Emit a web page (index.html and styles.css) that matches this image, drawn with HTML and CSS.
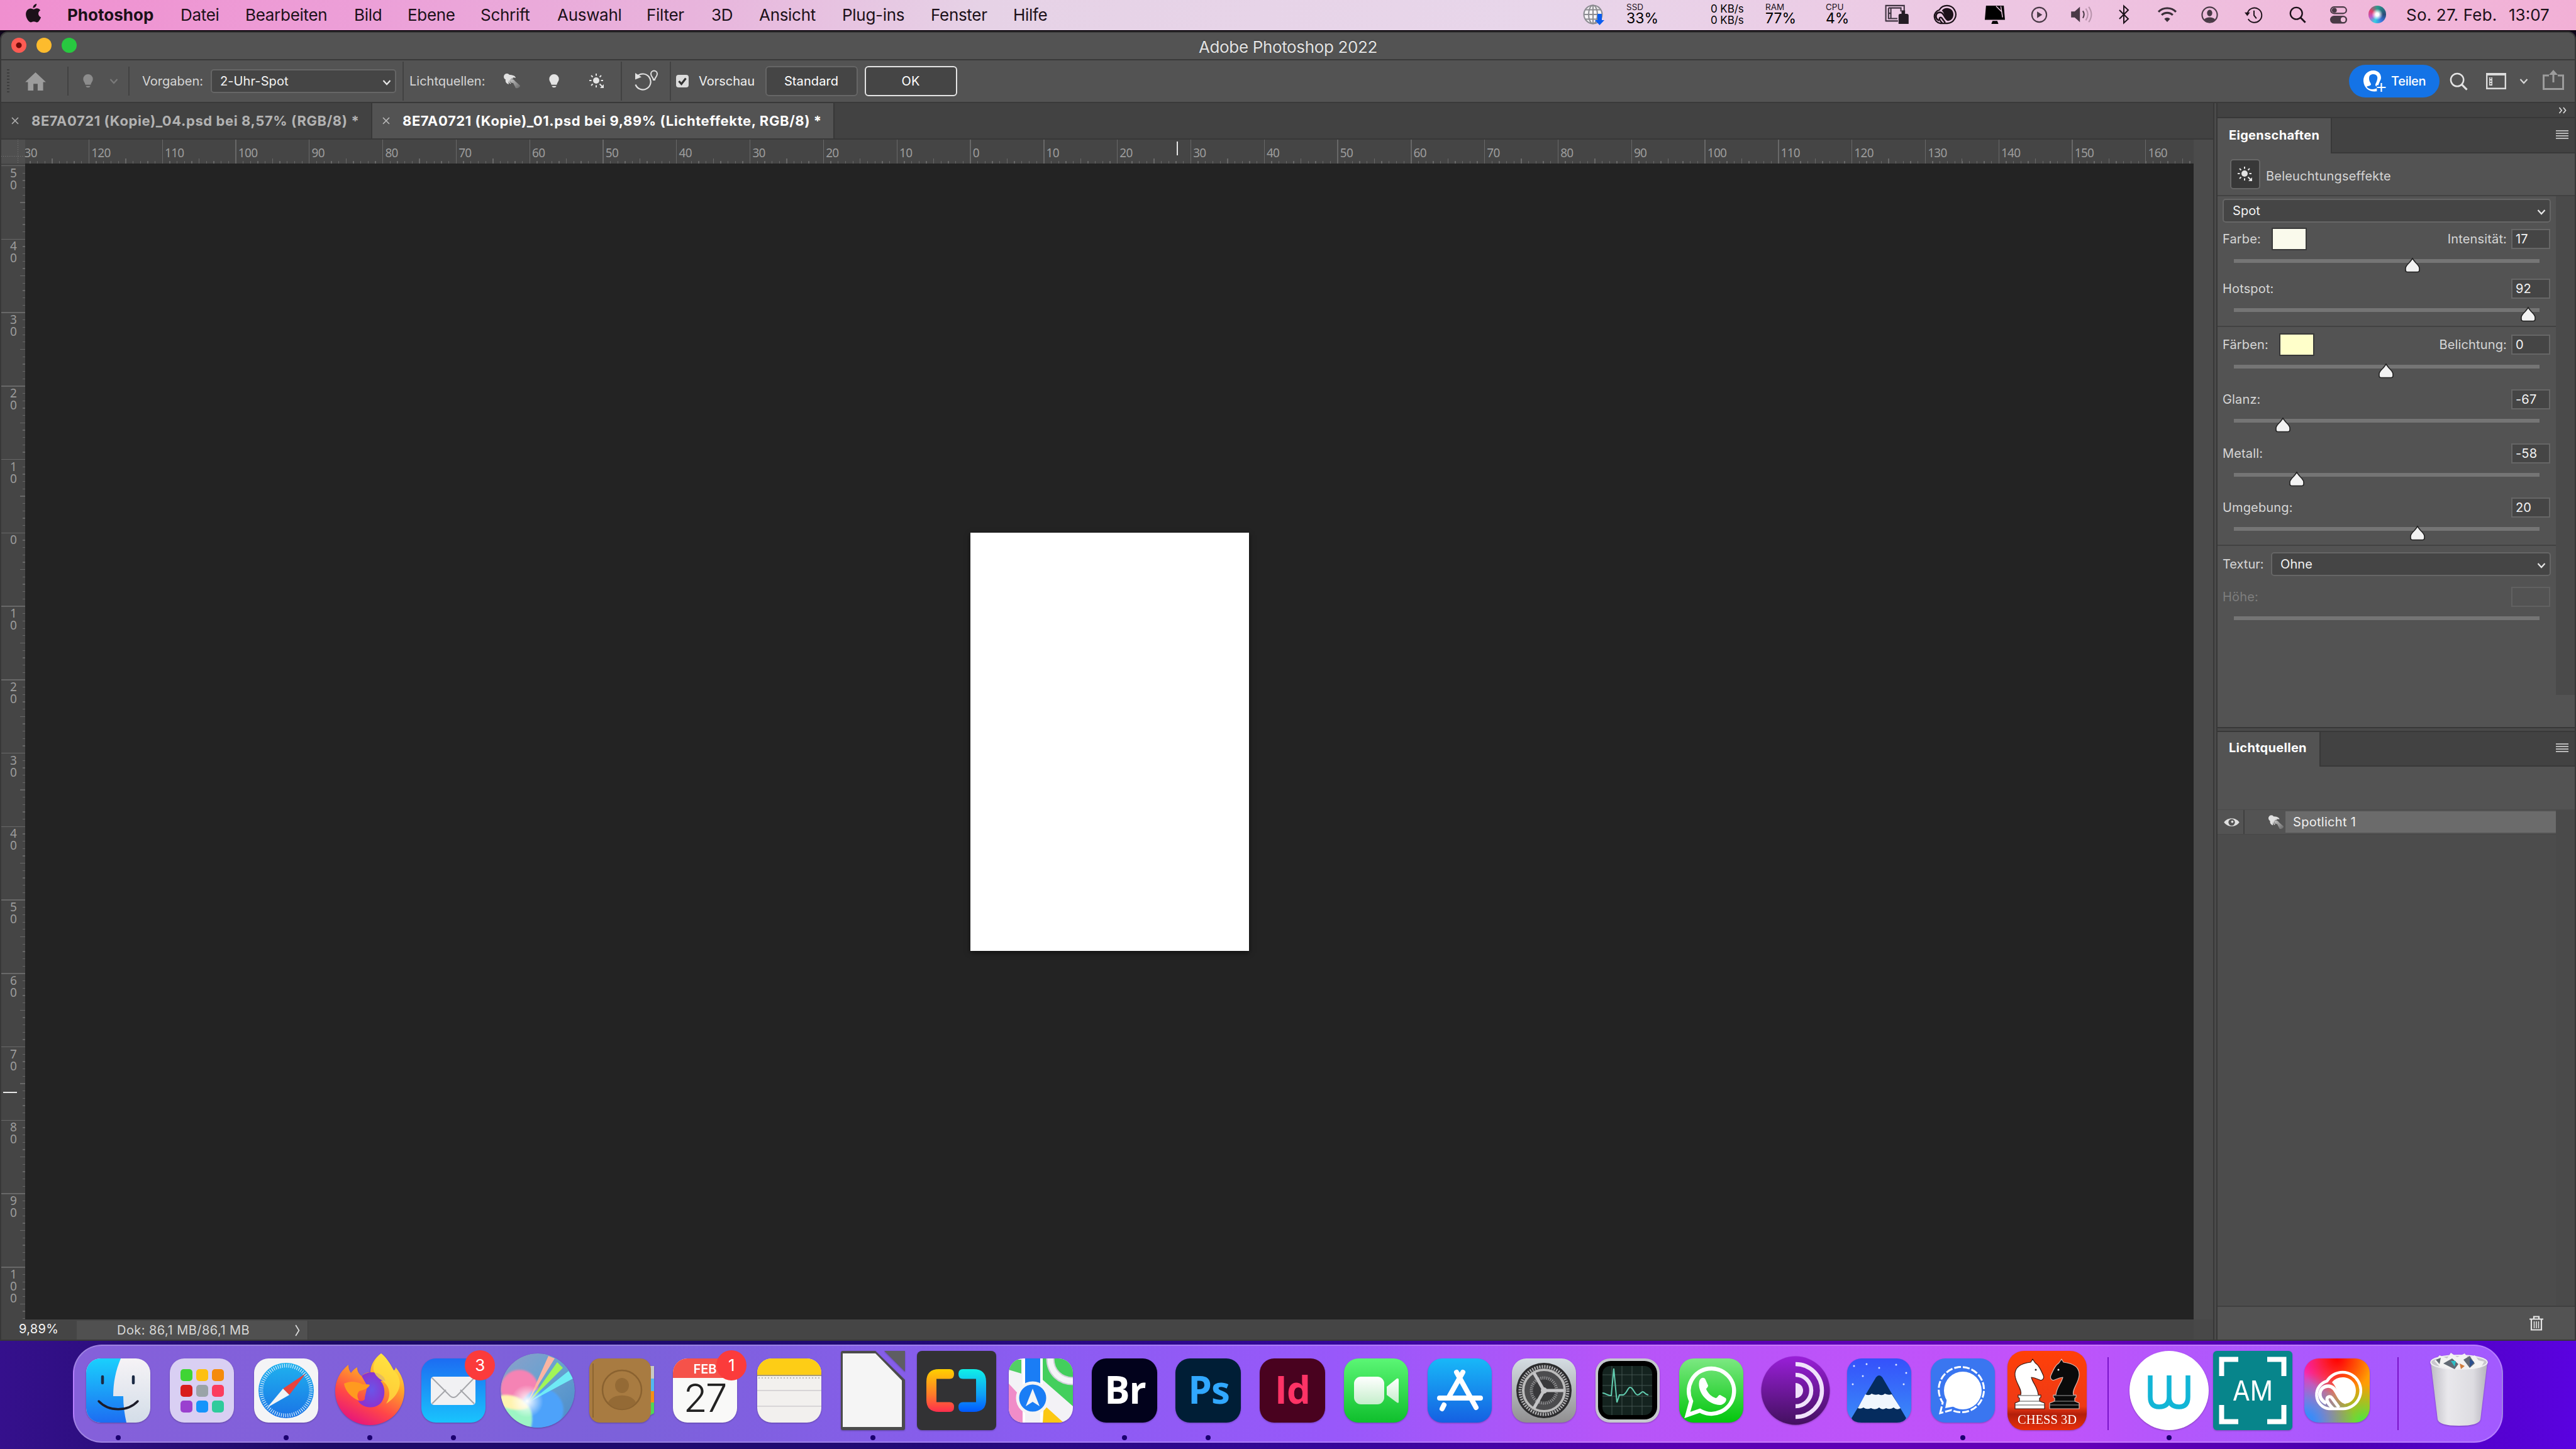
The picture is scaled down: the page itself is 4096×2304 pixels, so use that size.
FILE: index.html
```html
<!DOCTYPE html>
<html lang="de">
<head>
<meta charset="utf-8">
<title>Adobe Photoshop 2022</title>
<link rel="stylesheet" href="styles.css">
</head>
<body>
<svg class="defs" width="0" height="0" aria-hidden="true">
  <defs>
    <linearGradient id="g-cone" x1="0" y1="0" x2="1" y2="1"><stop offset="0" stop-color="#c4c4c4"/><stop offset="1" stop-color="#686868"/></linearGradient>
    <symbol id="chev" viewBox="0 0 14 10"><path d="M1.500 2 7 8l5.500-6" fill="none" stroke="currentColor" stroke-width="2.200"/></symbol>
    <symbol id="bulb" viewBox="0 0 18 24"><path d="M9 0a8 8 0 0 1 8 8.200c0 3.400-2.500 5-3.500 9.300h-9C3.500 13.200 1 11.600 1 8.200A8 8 0 0 1 9 0zM5 19.500h8L11 22H7z" fill="currentColor"/></symbol>
    <symbol id="spot" viewBox="0 0 28 24"><circle cx="6" cy="5" r="5" fill="#e0e0e0"/><path d="M8 2c4 0 11 0 12 5-3-1-6-1-8 1-3 2-4 5-3 9-4-1-6-4-5-8z" fill="#e0e0e0"/><path d="M12 16c-4-3-2-9 4-9" fill="none" stroke="#e0e0e0" stroke-width="1.500"/><path d="M11 11c1-3 5-3 8 1l8 7c0 3-4 5-7 4l-4-8c-3 0-5-1-5-4z" fill="url(#g-cone)"/></symbol>
    <symbol id="sun" viewBox="0 0 24 24"><circle cx="11" cy="11" r="5" fill="currentColor"/><path d="M11 0v3.500M11 18.500V22M0 11h3.500M18.500 11H22M3 3l2.500 2.500M19 3l-2.500 2.500M3 19l2.500-2.500M16.500 16.500l4 4" stroke="currentColor" stroke-width="2" fill="none"/><path d="M23 17v6h-6z" fill="currentColor"/></symbol>
    <symbol id="burger" viewBox="0 0 20 14"><path d="M0 1h20M0 5h20M0 9h20M0 13h20" stroke="currentColor" stroke-width="1.800"/></symbol>
    <symbol id="close" viewBox="0 0 12 12"><path d="m1 1 10 10M11 1 1 11" stroke="currentColor" stroke-width="1.600"/></symbol>
    <symbol id="thumb" viewBox="0 0 24 24"><path d="M12 1.500c1 1.500 2 3 5 6.500 4 4 6 6 6 9v3c0 2-1 3-3 3H4c-2 0-3-1-3-3v-3c0-3 2-5 6-9 3-3.500 4-5 5-6.500z" fill="#f2f2f2" stroke="#222" stroke-width="1.600"/></symbol>
    <symbol id="lens" viewBox="0 0 30 30"><circle cx="12.500" cy="12.500" r="10.500" fill="none" stroke="currentColor" stroke-width="2.600"/><path d="m20 20 8.500 8.500" stroke="currentColor" stroke-width="3.200"/></symbol>
    <symbol id="cloud" viewBox="0 0 84 66"><path d="M28 62h23a29 29 0 1 0-26-44A22.500 22.500 0 0 0 28 62z" fill="none" stroke="currentColor" stroke-width="4.500"/><path d="M24 53C8 46 12 26 27 26c15 0 13 22 28 26" fill="none" stroke="currentColor" stroke-width="5.500"/><path d="M44 60 33 45c-3-4-8-2-8 2 0 5 5 10 10 15" fill="none" stroke="currentColor" stroke-width="5"/><path d="M33 20C43 6 71 10 71 33c0 18-17 26-24 17-5-8-5-22-14-30z" fill="currentColor"/></symbol>
  </defs>
</svg>

<header class="menubar">
  <svg class="apple" viewBox="0 0 25 30"><path d="M17.500 0c.3 3-2.500 6.500-5.500 6.500C11.600 3.500 14.500.4 17.500 0zM13 8.500c1.200 0 2.800-1.400 5-1.400 2 0 4 1 5.300 2.900-4.500 2.700-3.800 8.800.9 10.800-1 2.900-3.500 7.700-6.200 7.700-1.800 0-2.500-1.100-4.800-1.100-2.300 0-3 1.100-4.700 1.100C5.500 28.500 1 22 1 16.300c0-5.600 3.600-9 7.200-9 2 0 3.500 1.200 4.800 1.200z" fill="#1c1119"/></svg>
  <nav class="menus"><b class="m-app">Photoshop</b><span>Datei</span><span>Bearbeiten</span><span>Bild</span><span>Ebene</span><span>Schrift</span><span>Auswahl</span><span>Filter</span><span>3D</span><span>Ansicht</span><span>Plug-ins</span><span>Fenster</span><span>Hilfe</span></nav>
  <div class="tray">
    <svg viewBox="0 0 34 34"><g fill="none" stroke="#8c8c92" stroke-width="2"><circle cx="17" cy="17" r="14.500" fill="#f5f2f5"/><ellipse cx="17" cy="17" rx="7" ry="14.500"/><path d="M17 2v30M2.500 17h29M5 9.500h24M5 24.500h24"/></g><path d="M24 16h7v10h4l-7.500 8L20 26h4z" fill="#0a5cf0"/></svg>
    <div class="stat"><small>SSD</small><span>33%</span></div>
    <div class="net"><span>0 KB/s</span><span>0 KB/s</span></div>
    <div class="stat"><small>RAM</small><span>77%</span></div>
    <div class="stat"><small>CPU</small><span>4%</span></div>
    <svg class="t-drive" viewBox="0 0 40 34"><path d="M1.500 29V2h31v9M1.500 28H22M6 6h21v6M6 6v18h15M10 6v18M6 15h5" fill="none" stroke="#3f3340" stroke-width="2.200"/><path d="M28 10h6v6h3c2 0 3 1 3 3v14H23V19c0-2 1-3 3-3h2z" fill="#241c24"/></svg>
    <svg class="t-cc"><use href="#cloud"/></svg>
    <svg class="t-mac" viewBox="0 0 36 34"><path d="M3 2h30l2 24H1zM14 28h8l2 5H12z" fill="#000"/><path d="m20 3 10 10M28 3l3 19" stroke="#efc8e2" stroke-width="1.500"/></svg>
    <svg class="t-play" viewBox="0 0 30 30"><circle cx="15" cy="15" r="12" fill="none" stroke="#493a46" stroke-width="2.200"/><path d="m11.500 9.500 8.500 5.500-8.500 5.500z" fill="#493a46"/></svg>
    <svg class="t-vol" viewBox="0 0 38 30"><path d="M1 10h6l9-8v26l-9-8H1z" fill="#493a46"/><path d="M21 9q4 6 0 12" fill="none" stroke="#493a46" stroke-width="2.200"/><path d="M26 5q7 10 0 20M31 2q9 13 0 26" fill="none" stroke="#b894ac" stroke-width="2.200"/></svg>
    <svg class="t-bt" viewBox="0 0 20 30"><path d="m3 8 14 14-7 6.500v-27L17 8 3 22" fill="none" stroke="#1c1119" stroke-width="2"/></svg>
    <svg class="t-wifi" viewBox="0 0 34 28"><path d="M2 9.500a21 21 0 0 1 30 0M7.500 15a13.500 13.500 0 0 1 19 0" fill="none" stroke="#3a2e38" stroke-width="3.400"/><path d="m17 27-5-5.500a7 7 0 0 1 10 0z" fill="#3a2e38"/></svg>
    <svg class="t-user" viewBox="0 0 30 30"><circle cx="15" cy="15" r="12.500" fill="none" stroke="#493a46" stroke-width="2.200"/><ellipse cx="15" cy="12" rx="4.300" ry="5.400" fill="#493a46"/><path d="M6 23c3-5 15-5 18 0-5 5-13 5-18 0z" fill="#493a46"/></svg>
    <svg class="t-clock" viewBox="0 0 30 30"><path d="M5 11.500A12 12 0 1 1 6 22M15.500 8v8l4 5" fill="none" stroke="#1c1119" stroke-width="2"/><path d="M0 11h9l-4.500 6z" fill="#1c1119"/></svg>
    <svg class="t-lens"><use href="#lens"/></svg>
    <svg class="t-ctl" viewBox="0 0 30 30"><rect x="2.200" y="2.200" width="25.600" height="10.600" rx="5.300" fill="none" stroke="#493a46" stroke-width="2.200"/><circle cx="8" cy="7.500" r="4" fill="#493a46"/><rect x="1" y="16.500" width="28" height="13" rx="6.500" fill="#493a46"/><circle cx="22.500" cy="23" r="4" fill="#f0bfdc"/></svg>
    <i class="siri"></i>
    <span class="date">So. 27. Feb.</span><span class="time">13:07</span>
  </div>
</header>

<main class="window">
  <div class="titlebar"><div class="lights"><i class="red"></i><i class="yellow"></i><i class="green"></i></div><h1>Adobe Photoshop 2022</h1><div></div></div>

  <div class="options">
    <i class="grip"></i>
    <svg class="home" viewBox="0 0 34 30"><path d="M17 0 0 16h4.500v14h9V19h7v11h9V16H34z" fill="#9c9c9c"/></svg>
    <i class="sep short"></i>
    <svg class="o-bulb dim"><use href="#bulb"/></svg>
    <svg class="o-chev dim2"><use href="#chev"/></svg>
    <i class="sep short"></i>
    <span class="lbl">Vorgaben:</span>
    <div class="select preset">2-Uhr-Spot<svg><use href="#chev"/></svg></div>
    <i class="sep"></i>
    <span class="lbl">Lichtquellen:</span>
    <svg class="o-spot"><use href="#spot"/></svg>
    <svg class="o-bulb2"><use href="#bulb"/></svg>
    <svg class="o-sun"><use href="#sun"/></svg>
    <i class="sep"></i>
    <svg class="o-reset" viewBox="0 0 40 34"><path d="M5 9.500a12.500 12.500 0 1 1-2.500 13" fill="none" stroke="#e0e0e0" stroke-width="2.200"/><path d="M2 4v10.500l10-4z" fill="#e0e0e0"/><path d="M31 15c0-4-4-5-4-9.500a5 5 0 0 1 10 0C37 10 33 11 33 15z" fill="none" stroke="#e0e0e0" stroke-width="2"/></svg>
    <i class="sep"></i>
    <svg class="check" viewBox="0 0 20 20"><rect width="20" height="20" rx="4" fill="#dcdcdc"/><path d="m4.500 10 4 4.500 7-9" fill="none" stroke="#333" stroke-width="3.200"/></svg>
    <span class="lbl white">Vorschau</span>
    <button class="btn">Standard</button>
    <button class="btn ok">OK</button>
    <i></i>
    <button class="share"><svg viewBox="0 0 40 36"><path d="M17 1c7 0 12 5 12 11.500 0 2.500-1 4-2 6l-1 2.500c-1 2-2 4 0 6-3 2-5 6-3 7-10 2-21-3-22-16C.5 8 8 1 17 1z" fill="#fff"/><path d="M17 7c5 0 7 4 6 8-1 5-3 7-3 9 0 3 3 2 4 4-5 4-14 4-18-1 2-2 7-1 7-4 0-2-3-4-3-9s2-7 7-7z" fill="#1473e6"/><path d="M29.500 20v15M22 27.500h15" stroke="#1473e6" stroke-width="6"/><path d="M29.500 21v14M22.500 28h14" stroke="#fff" stroke-width="2.200"/></svg>Teilen</button>
    <svg class="o-lens"><use href="#lens"/></svg>
    <svg class="o-work" viewBox="0 0 32 26"><path d="M1.200 2.500h29.600v22.300H1.200z" fill="none" stroke="#dcdcdc" stroke-width="2.400"/><path d="M0 0h32v4H0zM5 7h5v13H5z" fill="#dcdcdc"/><path d="M6.500 8.500h2M6.500 13h2M6.500 17h2" stroke="#535353" stroke-width="2"/></svg>
    <svg class="o-chev"><use href="#chev"/></svg>
    <svg class="o-share" viewBox="0 0 34 32"><path d="M10 9H1.500v21.500h31V9H24M17 20V4" fill="none" stroke="#9c9c9c" stroke-width="3"/><path d="m17 0 7 8H10z" fill="#9c9c9c"/></svg>
  </div>

  <div class="work">
    <section class="doc">
      <div class="tabs">
        <div class="tab t1"><svg><use href="#close"/></svg><span>8E7A0721 (Kopie)_04.psd bei 8,57% (RGB/8) *</span></div>
        <div class="tab t2 active"><svg><use href="#close"/></svg><span>8E7A0721 (Kopie)_01.psd bei 9,89% (Lichteffekte, RGB/8) *</span></div>
      </div>
      <div class="view">
        <div class="corner"></div>
        <div class="hruler"><div class="scale"><span>130</span><span>120</span><span>110</span><span>100</span><span>90</span><span>80</span><span>70</span><span>60</span><span>50</span><span>40</span><span>30</span><span>20</span><span>10</span><span>0</span><span>10</span><span>20</span><span>30</span><span>40</span><span>50</span><span>60</span><span>70</span><span>80</span><span>90</span><span>100</span><span>110</span><span>120</span><span>130</span><span>140</span><span>150</span><span>160</span></div><i class="hmark"></i></div>
        <div class="gutter"></div>
        <div class="vruler"><div class="scale"><span>5<br>0</span><span>4<br>0</span><span>3<br>0</span><span>2<br>0</span><span>1<br>0</span><span>0</span><span>1<br>0</span><span>2<br>0</span><span>3<br>0</span><span>4<br>0</span><span>5<br>0</span><span>6<br>0</span><span>7<br>0</span><span>8<br>0</span><span>9<br>0</span><span>1<br>0<br>0</span></div><i class="vmark"></i></div>
        <div class="canvas"><div class="page"></div></div>
      </div>
      <div class="status"><span class="zoom">9,89%</span><span class="size">Dok: 86,1 MB/86,1 MB<svg viewBox="0 0 8 20"><path d="m1 1 5.500 9L1 19" fill="none" stroke="#ddd" stroke-width="1.800"/></svg></span><i></i></div>
    </section>

    <aside class="side">
      <div class="collapse"><svg viewBox="0 0 14 12"><path d="m1 1 4 5-4 5M8 1l4 5-4 5" fill="none" stroke="#ddd" stroke-width="1.800"/></svg></div>
      <section class="props">
        <div class="ptabs"><b class="pt1">Eigenschaften</b><div><svg><use href="#burger"/></svg></div></div>
        <div class="phead"><span class="sunbtn"><svg><use href="#sun"/></svg></span><span>Beleuchtungseffekte</span></div>
        <div class="pbody">
          <form class="controls">
            <div class="select kind">Spot<svg><use href="#chev"/></svg></div>
            <div class="row r1"><span>Farbe:</span><i class="swatch light"></i><span class="right">Intensität:</span><span class="val">17</span></div>
            <div class="slider s8"><svg style="left:58.4%"><use href="#thumb"/></svg></div>
            <div class="row r5"><span>Hotspot:</span><span class="val">92</span></div>
            <div class="slider"><svg style="left:96.3%"><use href="#thumb"/></svg></div>
            <hr>
            <div class="row r10"><span>Färben:</span><i class="swatch warm"></i><span class="right">Belichtung:</span><span class="val">0</span></div>
            <div class="slider s8"><svg style="left:49.8%"><use href="#thumb"/></svg></div>
            <div class="row"><span>Glanz:</span><span class="val">-67</span></div>
            <div class="slider"><svg style="left:16%"><use href="#thumb"/></svg></div>
            <div class="row"><span>Metall:</span><span class="val">-58</span></div>
            <div class="slider"><svg style="left:20.6%"><use href="#thumb"/></svg></div>
            <div class="row"><span>Umgebung:</span><span class="val">20</span></div>
            <div class="slider"><svg style="left:60.1%"><use href="#thumb"/></svg></div>
            <hr>
            <div class="texture"><span>Textur:</span><div class="select">Ohne<svg><use href="#chev"/></svg></div></div>
            <div class="row r15 off"><span>Höhe:</span><span class="val"></span></div>
            <div class="slider"></div>
          </form>
          <div class="scroll"></div>
        </div>
      </section>
      <section class="lights-panel">
        <div class="ptabs"><b class="pt2">Lichtquellen</b><div><svg><use href="#burger"/></svg></div></div>
        <div class="blank"></div>
        <div class="list">
          <div class="item"><span class="eye"><svg viewBox="0 0 26 16"><path d="M0 8C6-1 20-1 26 8 20 17 6 17 0 8z" fill="#e0e0e0"/><circle cx="13" cy="8" r="5.500" fill="#535353"/><circle cx="14" cy="7" r="2" fill="#e0e0e0"/></svg></span><span class="ispot"><svg><use href="#spot"/></svg></span><span class="name">Spotlicht 1</span></div>
          <div class="scroll"></div>
        </div>
        <div class="pfoot"><svg viewBox="0 0 22 24"><path d="M0 5.500h22M7 5V1.500h8V5M3 6v16.500h16V6" fill="none" stroke="#e4e4e4" stroke-width="2.200"/><path d="M7.500 9v11M11 9v11M14.500 9v11" stroke="#e4e4e4" stroke-width="1.600"/></svg></div>
      </section>
    </aside>
  </div>
</main>

<footer class="desktop">
<div class="dock">
  <div class="app run"><svg viewBox="0 0 126 126"><defs><linearGradient id="fa" x2="0" y2="1"><stop stop-color="#1ad0fd"/><stop offset="1" stop-color="#1d6df2"/></linearGradient><linearGradient id="fb" x2="0" y2="1"><stop stop-color="#f6f3f6"/><stop offset="1" stop-color="#d3dde8"/></linearGradient></defs><rect x="12" y="12" width="102" height="102" rx="23" fill="url(#fb)"/><path d="M67 12H35a23 23 0 0 0-23 23v56a23 23 0 0 0 23 23h41c-3-13-5-27-5-42H55c0-22 4-41 12-60z" fill="url(#fa)"/><path d="M38 41v10M87 41v10" stroke="#1b2a44" stroke-width="4.500" stroke-linecap="round"/><path d="M32 80c16 17 46 17 62 0" fill="none" stroke="#1b1b28" stroke-width="3.500" stroke-linecap="round"/></svg></div>
  <div class="app"><svg viewBox="0 0 126 126"><rect x="12" y="12" width="102" height="102" rx="23" fill="#d9cff3"/><g><rect x="29" y="29" width="19" height="19" rx="5" fill="#3fd535"/><rect x="54" y="29" width="19" height="19" rx="5" fill="#fdc012"/><rect x="79" y="29" width="19" height="19" rx="5" fill="#f58b0c"/><rect x="29" y="54" width="19" height="19" rx="5" fill="#d81c1c"/><rect x="54" y="54" width="19" height="19" rx="5" fill="#9aa3a8"/><rect x="79" y="54" width="19" height="19" rx="5" fill="#fb3d5e"/><rect x="29" y="79" width="19" height="19" rx="5" fill="#9a40cf"/><rect x="54" y="79" width="19" height="19" rx="5" fill="#1594fb"/><rect x="79" y="79" width="19" height="19" rx="5" fill="#2fcb9c"/></g></svg></div>
  <div class="app run"><svg viewBox="0 0 126 126"><defs><linearGradient id="sa" x2="0" y2="1"><stop stop-color="#1fb2ee"/><stop offset="1" stop-color="#1a73e6"/></linearGradient></defs><rect x="12" y="12" width="102" height="102" rx="23" fill="#f4f4f6"/><circle cx="63" cy="63" r="44" fill="url(#sa)"/><circle cx="63" cy="63" r="39.500" fill="none" stroke="#d6ecfb" stroke-width="6" stroke-dasharray="1.200 2.247"/><path d="m94 36-36 24 10 10z" fill="#e8433c"/><path d="m33 90 25-30 10 10z" fill="#f2f4f6"/></svg></div>
  <div class="app run"><svg viewBox="0 0 126 126"><defs><linearGradient id="ff" x1=".8" y1="0" x2=".3" y2="1"><stop stop-color="#fff44f"/><stop offset=".35" stop-color="#ffa428"/><stop offset=".7" stop-color="#ff4648"/><stop offset="1" stop-color="#e5137f"/></linearGradient><radialGradient id="fp"><stop stop-color="#6a55e8"/><stop offset="1" stop-color="#8a34cf"/></radialGradient></defs><path d="M81 4c10 8 15 18 20 27 2-1 3-2 3-5 10 12 14 24 14 37 0 31-24 55-55 55S8 94 8 64c0-15 6-30 21-42 0 5 1 9 4 13 3-4 6-7 10-9 0 7 3 11 7 14 4-5 9-6 14-6 0-12 7-23 17-30z" fill="url(#ff)"/><path d="M50 40c12-11 35-6 38 8-3-1-6-1-8 0 8 8 8 24 2 33-8 12-30 12-38-2 8 2 12-1 11-5l4-18z" fill="url(#fp)"/><path d="M22 52c10-5 20-3 27 0 6 3 10 0 14 2-2 6-10 8-17 10-4 5-3 10 0 15-12-4-22-15-24-27z" fill="#ff9a1f"/><path d="M81 4c-20 20-12 34 0 42 14 9 17 24 8 38 26-17 27-40 12-53-5-9-10-19-20-27z" fill="#ffe03f" opacity=".8"/></svg></div>
  <div class="app run"><svg viewBox="0 0 126 126"><defs><linearGradient id="ma" x2="0" y2="1"><stop stop-color="#1c6cf2"/><stop offset="1" stop-color="#19c4fd"/></linearGradient></defs><rect x="12" y="12" width="102" height="102" rx="23" fill="url(#ma)"/><rect x="27" y="41" width="71" height="45" rx="5" fill="#f1f1f3"/><path d="m29 43 29 29q5 4 10 0l28-29M29 84l22-22M96 84 74 62" fill="none" stroke="#a5a6aa" stroke-width="2"/></svg><b class="badge">3</b></div>
  <div class="app"><svg viewBox="0 0 126 126"><defs><linearGradient id="sp" x1="0" y1="0" x2="1" y2="1"><stop stop-color="#8f9fc8"/><stop offset=".45" stop-color="#6aa2d0"/><stop offset="1" stop-color="#4a8ac8"/></linearGradient><radialGradient id="sw"><stop stop-color="#fff"/><stop offset="1" stop-color="#fff" stop-opacity="0"/></radialGradient><clipPath id="sc"><circle cx="63" cy="63" r="59"/></clipPath><filter id="sb"><feGaussianBlur stdDeviation="1.500"/></filter></defs><g clip-path="url(#sc)"><circle cx="63" cy="63" r="59" fill="url(#sp)"/><g filter="url(#sb)"><circle cx="34" cy="60" r="30" fill="#f583b4"/><circle cx="70" cy="94" r="34" fill="#4ea2fa"/><path d="M0 76c12-8 30-6 44 6 12 12 12 30 6 46H0z" fill="#9df5c4"/><path d="M0 72c20-6 42 4 48 18-12 6-30 4-46-4z" fill="#fff3b0"/></g><path d="M48 80 80 8l10 4z" fill="#fbb5a2"/><path d="m50 80 44-62 9 9z" fill="#a2f558"/><path d="m52 80 60-48 7 12z" fill="#6febf5"/><circle cx="46" cy="80" r="26" fill="url(#sw)"/></g></svg></div>
  <div class="app"><svg viewBox="0 0 126 126"><path d="M104 24h11v20h-11z" fill="#c9c9c4"/><path d="M104 44h11v20h-11z" fill="#52b7f0"/><path d="M104 64h11v18h-11z" fill="#f58f16"/><path d="M104 82h11v17l-11 6z" fill="#4ed558"/><rect x="12" y="12" width="98" height="102" rx="17" fill="#a87b41"/><path d="M18 20v86" stroke="#8d6530" stroke-width="2"/><circle cx="64" cy="62" r="31" fill="none" stroke="#8a6230" stroke-width="2.500"/><ellipse cx="64" cy="55" rx="11" ry="12" fill="#946a35"/><path d="M42 82c6-15 38-15 44 0-10 14-34 14-44 0z" fill="#946a35"/></svg></div>
  <div class="app"><svg viewBox="0 0 126 126"><rect x="12" y="12" width="102" height="102" rx="23" fill="#f9f9f8"/><path d="M12 43v-8a23 23 0 0 1 23-23h56a23 23 0 0 1 23 23v8z" fill="#f5524a"/><text x="63" y="36" text-anchor="middle" font-family="Inter,sans-serif" font-weight="600" font-size="20" fill="#fff">FEB</text><text x="62" y="97" text-anchor="middle" font-family="Inter,sans-serif" font-weight="300" font-size="62" letter-spacing="-3" fill="#222">27</text></svg><b class="badge">1</b></div>
  <div class="app"><svg viewBox="0 0 126 126"><rect x="12" y="12" width="102" height="102" rx="23" fill="#f2f0ee"/><path d="M12 38v-3a23 23 0 0 1 23-23h56a23 23 0 0 1 23 23v3z" fill="#fdcd16"/><path d="M12 39h102" stroke="#a99c74" stroke-width="2"/><path d="M14 43h98" stroke="#bdbab4" stroke-width="2" stroke-dasharray="2 3"/><path d="M12 63h102M12 88h102" stroke="#cfccd0" stroke-width="1.500"/></svg></div>
  <div class="app run"><svg viewBox="0 0 126 126"><path d="M12 3q0-3 3-3h52l47 46v77q0 3-3 3H15q-3 0-3-3z" fill="#4b4b4b"/><path d="M15 4h52l42 43v74H15z" fill="#f5f5f5"/><path d="M81 0h33v33z" fill="#5e5e62"/></svg></div>
  <div class="app"><svg viewBox="0 0 126 126"><defs><linearGradient id="ca" x2="0" y2="1"><stop stop-color="#ffd000"/><stop offset=".6" stop-color="#ff7a2a"/><stop offset="1" stop-color="#ff2e4d"/></linearGradient><linearGradient id="cb" x2="0" y2="1"><stop stop-color="#0ff0e8"/><stop offset=".6" stop-color="#0f9ef5"/><stop offset="1" stop-color="#0058ff"/></linearGradient></defs><rect width="126" height="126" rx="8" fill="#323234"/><path d="M59 36.500q0 8-7 8H31v37h21q7 0 7 7.500 0 8-7 8H35Q15 97 15 78V49Q15 29 35 29h17q7 0 7 7.500z" fill="url(#ca)"/><path d="M66 36.500q0 8 7 8h21v37H73q-7 0-7 7.500 0 8 7 8h17q20 0 20-19V49q0-20-20-20H73q-7 0-7 7.500z" fill="url(#cb)"/></svg></div>
  <div class="app"><svg viewBox="0 0 126 126"><defs><clipPath id="mc"><rect x="12" y="12" width="102" height="102" rx="23"/></clipPath></defs><g clip-path="url(#mc)"><path d="M12 12h102v102H12z" fill="#f3f2f6"/><path d="M12 14h20v22L12 30z" fill="#52cf64"/><path d="M66 12h48v76L66 46z" fill="#43cf5d"/><path d="M12 52l24 26v36H12z" fill="#f08cc8"/><path d="m68 86 31 28H66z" fill="#fcc813"/><path d="M38 12h24v62H38z" fill="#1a7df5"/><path d="M36 12v102M64 12v102" stroke="#fff" stroke-width="4"/><path d="M78 12c0 22 16 36 36 36" fill="none" stroke="#d0d0d8" stroke-width="13"/><path d="M78 12c0 22 16 36 36 36" fill="none" stroke="#f4f4f8" stroke-width="9"/></g><circle cx="50" cy="75" r="24" fill="#1a7df5" stroke="#f4f4f6" stroke-width="5"/><path d="m50 60 11 28-11-7-11 7z" fill="#f4f4f6"/></svg></div>
  <div class="app run"><svg viewBox="0 0 126 126"><rect x="11" y="12" width="104" height="102" rx="23" fill="#02021c"/><text x="64" y="84" class="adobe" fill="#fff">Br</text></svg></div>
  <div class="app run"><svg viewBox="0 0 126 126"><rect x="11" y="12" width="104" height="102" rx="23" fill="#001e36"/><text x="64" y="84" class="adobe" fill="#31a8ff">Ps</text></svg></div>
  <div class="app"><svg viewBox="0 0 126 126"><rect x="11" y="12" width="104" height="102" rx="23" fill="#49021f"/><text x="63" y="84" class="adobe" fill="#ff3366">Id</text></svg></div>
  <div class="app"><svg viewBox="0 0 126 126"><defs><linearGradient id="fc" x2="0" y2="1"><stop stop-color="#5bf675"/><stop offset="1" stop-color="#0fbf2c"/></linearGradient><linearGradient id="fd" x2="0" y2="1"><stop stop-color="#fff"/><stop offset="1" stop-color="#c5eecb"/></linearGradient></defs><rect x="12" y="12" width="102" height="102" rx="23" fill="url(#fc)"/><rect x="28" y="41" width="48" height="44" rx="11" fill="url(#fd)"/><path d="M80 57 96 44q3-1 3 2v35q0 3-3 1L80 70z" fill="url(#fd)"/></svg></div>
  <div class="app"><svg viewBox="0 0 126 126"><defs><linearGradient id="as" x2="0" y2="1"><stop stop-color="#18b8f8"/><stop offset="1" stop-color="#1560e2"/></linearGradient></defs><rect x="12" y="12" width="102" height="102" rx="23" fill="url(#as)"/><path d="M31 75h65M68 34 46 73M38 86l-3 6M58 34l31 56" fill="none" stroke="#fff" stroke-width="8" stroke-linecap="round"/></svg></div>
  <div class="app"><svg viewBox="0 0 126 126"><defs><linearGradient id="st" x2="0" y2="1"><stop stop-color="#d5dde3"/><stop offset="1" stop-color="#908f90"/></linearGradient></defs><rect x="12" y="12" width="102" height="102" rx="23" fill="url(#st)"/><circle cx="63" cy="63" r="44" fill="#2c2c2e"/><circle cx="63" cy="63" r="38" fill="none" stroke="#b0b0b2" stroke-width="5" stroke-dasharray="2.200 1.780"/><circle cx="63" cy="63" r="33" fill="#4c4c4e" stroke="#bbb" stroke-width="4"/><circle cx="63" cy="63" r="20" fill="#39393b" stroke="#8d8d8f" stroke-width="5" stroke-dasharray="1.600 1.540"/><path d="M63 63h32M63 63 47 35M63 63 47 91" stroke="#c4c4c6" stroke-width="5"/><circle cx="63" cy="63" r="5" fill="#c4c4c6"/></svg></div>
  <div class="app"><svg viewBox="0 0 126 126"><rect x="12" y="12" width="102" height="102" rx="23" fill="#c5c8cd"/><rect x="16" y="16" width="94" height="93" rx="20" fill="#000"/><rect x="23" y="24" width="79" height="78" rx="12" fill="#14231f"/><path d="M38 24v78M54 24v78M70 24v78M86 24v78M23 38h79M23 55h79M23 72h79M23 88h79" stroke="#41534e" stroke-width="1"/><path d="M23 67c6 0 8 5 14 4l4-43 5 54 4-12h6c6-2 7-12 11-12 5 0 7 12 12 12 4 0 5-5 8-5 3 0 4 5 9 5" fill="none" stroke="#62cdb0" stroke-width="2"/></svg></div>
  <div class="app"><svg viewBox="0 0 126 126"><defs><linearGradient id="wa" x2="0" y2="1"><stop stop-color="#7ce882"/><stop offset="1" stop-color="#02c60c"/></linearGradient></defs><rect x="12" y="12" width="102" height="102" rx="23" fill="url(#wa)"/><path d="M25 102l6-22a36 36 0 1 1 14 15z" fill="none" stroke="#fff" stroke-width="6.500"/><path d="M44 48c2-6 8-7 10-2l4 9c0 3-3 4-3 6 3 7 9 12 15 14 3 0 4-5 7-5l9 5c3 4-3 11-9 11C58 86 40 66 44 48z" fill="#fff"/></svg></div>
  <div class="app"><svg viewBox="0 0 126 126"><defs><linearGradient id="to" x2="0" y2="1"><stop stop-color="#991fd8"/><stop offset="1" stop-color="#43105f"/></linearGradient></defs><circle cx="63" cy="63" r="54.500" fill="url(#to)"/><path d="M63 21a42 42 0 0 1 0 84M63 38a25 25 0 0 1 0 50" fill="none" stroke="#f0e2fb" stroke-width="6.500"/><path d="M63 51a12 12 0 0 1 0 24z" fill="#f0e2fb"/></svg></div>
  <div class="app"><svg viewBox="0 0 126 126"><defs><linearGradient id="mo" x2="0" y2="1"><stop stop-color="#3551fb"/><stop offset="1" stop-color="#3a8cf8"/></linearGradient></defs><rect x="12" y="12" width="102" height="102" rx="23" fill="url(#mo)"/><path d="m58 42q5-6 10 0l38 65q-4 7-15 7H35q-13 0-16-7z" fill="#052c5e"/><path d="m41 69q6 3 10-1 5 3 11 1 6 3 10-1 6 3 11 1l14 22q-6 4-11-1-6 4-12 1-6 4-11-1-6 5-13 1-7 3-12-1-4 3-9 1z" fill="#f0f6fd"/><g fill="#dfe8ff"><circle cx="23" cy="24" r="1.500"/><circle cx="43" cy="21" r="1.500"/><circle cx="63" cy="27" r="1.500"/><circle cx="90" cy="22" r="1.500"/><circle cx="37" cy="40" r="1.500"/><circle cx="106" cy="35" r="1.500"/><circle cx="21" cy="53" r="1.500"/><circle cx="102" cy="53" r="1.500"/></g></svg></div>
  <div class="app run"><svg viewBox="0 0 126 126"><rect x="12" y="12" width="102" height="102" rx="23" fill="#3a76f0"/><circle cx="63" cy="63" r="30" fill="#fff"/><path d="m35 91 3-16 13 13z" fill="#fff"/><path d="M27 99l4-17a36 36 0 1 1 14 12z" fill="none" stroke="#fff" stroke-width="3" stroke-dasharray="11 3"/></svg></div>
  <div class="app"><svg viewBox="0 0 126 126"><defs><linearGradient id="ch" x2="0" y2="1"><stop stop-color="#ff4008"/><stop offset=".7" stop-color="#ee3a16"/><stop offset=".8" stop-color="#b31f0a"/><stop offset="1" stop-color="#e8300a"/></linearGradient></defs><rect width="126" height="126" rx="26" fill="url(#ch)"/><g stroke-width="1.200" stroke-linejoin="round"><path d="M12 92v-9l7-3v-5l-2-1v-4h4c3-8-8-19-9-31-1-12 8-19 25-21l3-5 4 6c6 4 9 11 13 20 2 5-2 9-6 7l-8-3-5-1c2 9 10 16 11 28h4v4l-2 1v5l8 3v9z" fill="#fff" stroke="#3a1a14"/><path d="M114 92v-9l-7-3v-5l2-1v-4h-4c-3-8 8-19 9-31 1-12-8-19-25-21l-3-5-4 6c-6 4-9 11-13 20-2 5 2 9 6 7l8-3 5-1c-2 9-10 16-11 28h-4v4l2 1v5l-8 3v9z" fill="#0a0a0a" stroke="#d9b8b0"/><path d="M18 71h34M19 80h34M12 86h47" stroke="#555" fill="none"/><path d="M108 71H74M107 80H73M114 86H67" stroke="#999" fill="none"/><circle cx="45" cy="30" r="1.500" fill="#222"/><circle cx="81" cy="30" r="1.500" fill="#eee"/></g><text x="63" y="116" text-anchor="middle" font-family="Liberation Serif,serif" font-size="21" textLength="94" lengthAdjust="spacingAndGlyphs" fill="#fff">CHESS 3D</text></svg></div>
  <i class="divider"></i>
  <div class="app run"><svg viewBox="0 0 126 126"><circle cx="63" cy="63" r="63" fill="#fff"/><path d="M33 39v34q0 16 14 16 16 0 16-16V39v34q0 16 16 16 14 0 14-16V39" fill="none" stroke="#12b5d6" stroke-width="7.500"/></svg></div>
  <div class="app"><svg viewBox="0 0 126 126"><rect width="126" height="126" rx="6" fill="#07858b"/><path d="M13.500 40V13.500H40M86 13.500h26.500V40M112.500 86v26.500H86M40 112.500H13.500V86" fill="none" stroke="#fff" stroke-width="8"/><text x="63" y="79" text-anchor="middle" font-family="Inter,sans-serif" font-size="44" textLength="64" lengthAdjust="spacingAndGlyphs" fill="#fff">AM</text></svg></div>
  <div class="app"><svg class="cc" viewBox="0 0 126 126"><foreignObject x="11" y="12" width="104" height="102"><div class="ccbg"></div></foreignObject><use href="#cloud" x="22" y="30" width="84" height="66" color="#fff"/></svg></div>
  <i class="divider"></i>
  <div class="app"><svg viewBox="0 0 126 126"><defs><linearGradient id="tr"><stop stop-color="#bdbcc3"/><stop offset=".3" stop-color="#e9e8ec"/><stop offset=".75" stop-color="#dddce1"/><stop offset="1" stop-color="#b4b2bb"/></linearGradient></defs><path d="M18 18h90L97 109q-2 10-34 10T29 109z" fill="url(#tr)"/><ellipse cx="63" cy="18" rx="45" ry="11" fill="#c8c6cc" stroke="#eeedf1" stroke-width="2"/><path d="m24 16 8-9 12 5 6-9 10 7 12-6 6 8 10-5 6 8 9 2-5 9-14 3-18 0-20-1-14-3z" fill="#f2f2f2"/><path d="m38 20 14-8 10 9-6 8zM70 14l10-6 8 12-8 7zM26 14l8-3-2 10z" fill="#626a74"/><path d="m50 16 8 0-2 9z" fill="#2cc0c8"/><path d="m80 12 7 6-7 8z" fill="#294f8e"/><path d="m64 20 8 4-6 5z" fill="#d07c3c"/></svg></div>
</div>
</footer>
</body>
</html>
```

FILE: styles.css
```css
* { box-sizing: border-box; }
body { margin: 0; width: 4096px; height: 2304px; overflow: hidden; display: flex; flex-direction: column; background: #10051c; font-family: Inter, "Liberation Sans", sans-serif; font-size: 20px; color: #d6d6d6; }
svg { display: block; overflow: visible; }
i { display: block; }
.defs { position: absolute; }

/* menu bar */
.menubar { height: 50px; flex: none; display: flex; align-items: center; padding: 0 39px 2px 40px; border-bottom: 2px solid #0b060c; background: linear-gradient(90deg, #f08fcf 0, #eca0d8 600px, #e8b4dc 1100px, #e6d2e6 1560px, #e8d6ea 2450px, #edc6e2 3200px, #f2b0d6 4096px); color: #1c1119; font-size: 26px; }
.apple { width: 26px; height: 31px; margin-top: -4px; }
.menus { display: grid; grid-template-columns: 180px 103px 173px 85px 116px 122px 142px 103px 76px 132px 141px 131px 100px; margin-left: 41px; align-items: center; letter-spacing: -.3px; white-space: nowrap; }
.m-app { letter-spacing: 0; }
.tray { margin-left: auto; width: 1541px; display: grid; grid-template-columns: 70px 104px 117px 96px 93px 76px 82px 74px 63px 76px 62px 70px 70px 71px 64px 62px 60px 163px 1fr; align-items: center; white-space: nowrap; }
.tray > svg:first-child { width: 34px; height: 34px; }
.stat { line-height: 1; display: grid; gap: 0; }
.stat small { font-size: 13.500px; height: 13px; }
.stat span { font-size: 23px; letter-spacing: 0; color: #000; }
.net { display: grid; font-size: 17px; line-height: 18px; letter-spacing: -.1px; padding-left: 30px; color: #000; }
.t-drive { width: 40px; height: 32px; }
.t-cc { width: 42px; height: 32px; margin-left: -1px; }
.t-mac { width: 36px; height: 32px; }
.t-play, .t-user, .t-clock, .t-ctl { width: 29px; height: 29px; }
.t-vol { width: 38px; height: 28px; }
.t-bt { width: 20px; height: 30px; }
.t-wifi { width: 34px; height: 26px; }
.t-lens { width: 27px; height: 27px; }
.siri { width: 28px; height: 28px; border-radius: 50%; background: radial-gradient(circle, #fff 0 12%, transparent 45%), conic-gradient(#2a9b8c, #2a4a78 90deg, #3a78e0 150deg, #35d0e0 200deg, #c058c8 250deg, #e0406a 300deg, #2a9b8c); }
.date { letter-spacing: .2px; }
.time { letter-spacing: 0; }

/* window */
.window { flex: none; height: 2082px; border: 2px solid #383838; border-radius: 12px 12px 0 0; background: #535353; overflow: hidden; display: flex; flex-direction: column; }
.titlebar { height: 44px; flex: none; border-bottom: 2px solid #393939; display: grid; grid-template-columns: 1fr auto 1fr; align-items: center; }
.titlebar h1 { margin: 3px 0 0; font-size: 26px; font-weight: 400; line-height: 32px; letter-spacing: -.35px; color: #e2e2e2; text-shadow: 0 -1px 1px #333; }
.lights { display: flex; gap: 16px; padding-left: 16px; margin-top: -2px; }
.lights i { width: 24px; height: 24px; border-radius: 50%; }
.red { background: radial-gradient(circle, #6f0b08 0 4px, #fd5b53 5px); }
.yellow { background: #fdbb2d; }
.green { background: #28c840; }

.options { height: 68px; flex: none; border-bottom: 2px solid #393939; display: grid; grid-template-columns: 38px 67px 24px 40px 33px 22px 109px 305px 11px 145px 68px 67px 56px 21px 57px 10px 36px 106px 158px 148px 1fr 160px 58px 50px 40px 51px; align-items: center; white-space: nowrap; }
.grip { width: 4px; height: 38px; margin-left: 9px; background: repeating-linear-gradient(#3d3d3d 0 2px, transparent 2px 5px); }
.home { width: 33px; height: 29px; }
.sep { width: 2px; height: 62px; background: #424242; }
.sep.short { height: 46px; }
.o-bulb { width: 18px; height: 23px; }
.o-bulb2 { width: 18px; height: 23px; margin-left: 8px; color: #e4e4e4; }
.dim { color: #8c8c8c; }
.o-chev { width: 14px; height: 10px; margin-left: 3px; }
.dim2 { color: #7a7a7a; }
.o-spot { width: 28px; height: 24px; margin-left: 4px; }
.o-sun { width: 24px; height: 24px; margin-left: 6px; color: #e4e4e4; }
.o-reset { width: 40px; height: 34px; }
.check { width: 20px; height: 20px; }
.white { color: #f0f0f0; }
.select { display: flex; align-items: center; justify-content: space-between; height: 38px; border: 2px solid #666; border-radius: 5px; background: #454545; color: #f2f2f2; padding: 0 6px 0 14px; letter-spacing: .1px; }
.select svg { width: 14px; height: 10px; margin-top: 4px; color: #e8e8e8; }
.preset { width: 295px; padding-left: 13px; }
.btn { height: 48px; width: 147px; border: 2px solid #666; border-radius: 6px; background: #454545; color: #fff; font: 20px Inter, sans-serif; padding: 0 1px 0 0; letter-spacing: .1px; }
.btn.ok { border-color: #e4e4e4; }
.share { height: 52px; width: 144px; border: 0; border-radius: 26px; background: #1473e6; color: #fff; font: 500 20px Inter, sans-serif; display: flex; align-items: center; gap: 5px; padding: 0 0 0 22px; letter-spacing: -.3px; }
.share svg { width: 40px; height: 36px; flex: none; }
.o-lens { width: 29px; height: 29px; color: #e4e4e4; }
.o-work { width: 32px; height: 26px; }
.o-share { width: 34px; height: 32px; margin-top: -4px; }

.work { flex: 1; display: flex; min-height: 0; background: #4a4a4a; }

/* document */
.doc { width: 3519px; border-right: 2px solid #383838; margin-right: 3px; display: flex; flex-direction: column; background: #4b4b4b; }
.tabs { height: 58px; flex: none; display: flex; background: #424242; border-bottom: 2px solid #383838; }
.tab { display: flex; align-items: center; border-right: 2px solid #383838; font-size: 22px; font-weight: 700; letter-spacing: .59px; color: #b2b2b2; white-space: nowrap; }
.tab svg { width: 12px; height: 12px; margin: 0 20px 0 16px; flex: none; }
.t1 { width: 590px; }
.t2 { width: 735px; background: #535353; color: #fff; }
.t2 svg { color: #bbb; }
.view { flex: 1; min-height: 0; display: grid; grid-template: 38px 1fr / 38px 3448px 1fr; }
.corner { background: repeating-linear-gradient(#777 0 1px, transparent 1px 3px) 26px 0 / 1px 100% no-repeat, repeating-linear-gradient(90deg, #777 0 1px, transparent 1px 3px) 0 26px / 100% 1px no-repeat, #4f4f4f; }
.hruler, .vruler { position: relative; overflow: hidden; background: #454545; color: #9c9c9c; font: 19px "Noto Sans", sans-serif; letter-spacing: -.7px; }
.hruler .scale { display: flex; margin-left: -15.600px; width: 3504px; height: 38px; background: repeating-linear-gradient(90deg, #686868 0 1.300px, transparent 1.300px 11.680px) 0 100% / 100% 4px no-repeat, repeating-linear-gradient(90deg, #686868 0 1.300px, transparent 1.300px 58.400px) 0 100% / 100% 8px no-repeat, repeating-linear-gradient(90deg, #686868 0 1.300px, transparent 1.300px 116.800px); }
.hruler span { flex: 0 0 116.800px; padding-left: 4px; line-height: 42px; }
.hmark { position: absolute; left: 1831px; top: 3px; width: 2px; height: 22px; background: #e6e6e6; }
.gutter { grid-row: 1 / 3; grid-column: 3; background: #4b4b4b; }
.vruler .scale { display: flex; flex-direction: column; margin-top: 3px; height: 1868px; background: repeating-linear-gradient(#686868 0 1.300px, transparent 1.300px 11.675px) 100% 0 / 4px 100% no-repeat, repeating-linear-gradient(#686868 0 1.300px, transparent 1.300px 58.375px) 100% 0 / 8px 100% no-repeat, repeating-linear-gradient(#686868 0 1.300px, transparent 1.300px 116.750px); }
.vruler span { flex: 0 0 116.750px; padding: 2.500px 0 0 14px; line-height: 19px; }
.vmark { position: absolute; left: 3px; top: 1476px; width: 22px; height: 2px; background: #e6e6e6; }
.canvas { background: #232323; }
.page { width: 443px; height: 665px; margin: 587px 0 0 1503px; background: #fff; box-shadow: 0 3px 8px #0008; }
.status { height: 32px; flex: none; display: flex; background: linear-gradient(90deg, #454545 3486px, #484848 0); align-items: stretch; font-size: 20px; line-height: 31px; padding-top: 2px; }
.zoom { width: 120px; padding-left: 28px; color: #f4f4f4; letter-spacing: .3px; line-height: 27px; }
.size { width: 368px; background: #505050; padding: 0 12px 0 64px; letter-spacing: .45px; display: flex; justify-content: space-between; line-height: 27px; align-items: center; border-right: 1px solid #3d3d3d; }
.size svg { width: 8px; height: 19px; }

/* panels */
.side { width: 570px; border-left: 2px solid #383838; display: flex; flex-direction: column; }
.collapse { height: 24px; flex: none; background: #424242; border-bottom: 2px solid #383838; display: flex; justify-content: flex-end; align-items: center; padding-right: 12px; }
.collapse svg { width: 14px; height: 11px; }
.props { height: 970px; flex: none; background: #535353; border-bottom: 2px solid #383838; display: flex; flex-direction: column; }
.ptabs { height: 56px; flex: none; display: flex; }
.ptabs b { padding-left: 18px; line-height: 54px; color: #fff; font-weight: 700; letter-spacing: .3px; }
.pt1 { width: 180px; }
.pt2 { width: 162px; }
.ptabs div { flex: 1; display: flex; justify-content: flex-end; align-items: center; padding: 0 10px 2px 0; background: #424242; border-left: 2px solid #383838; border-bottom: 2px solid #383838; color: #b8b8b8; }
.ptabs svg { width: 20px; height: 14px; }
.phead { height: 68px; flex: none; display: flex; align-items: center; gap: 9px; padding: 0 0 0 20px; border-bottom: 2px solid #424242; letter-spacing: .2px; }
.phead > span:last-child { margin-top: 5px; }
.sunbtn { width: 48px; height: 48px; border: 2px solid #666; border-radius: 5px; background: #383838; display: grid; place-items: center; color: #e4e4e4; }
.sunbtn svg { width: 24px; height: 24px; }
.pbody { display: flex; height: 793px; flex: none; }
.scroll { width: 30px; background: #4a4a4a; }
.controls { flex: 1; padding: 4px 8px 0; margin: 0; }
.row { display: flex; align-items: center; height: 36px; margin-top: 13px; letter-spacing: .15px; }
.r1 { margin-top: 8px; }
.r5 { margin-top: 5px; }
.r10 { margin-top: 10px; }
.r15 { margin-top: 15px; }
.swatch { width: 56px; height: 36px; border: 2px solid #383838; margin-left: 17px; }
.light { background: #fafaec; }
.warm { background: #ffffca; }
.right { margin-left: auto; }
.val { width: 62px; height: 32px; margin: 0 1px 0 7px; border: 2px solid #666; background: #454545; color: #f2f2f2; padding-left: 5px; line-height: 28px; }
.row > span:first-child + .val { margin-left: auto; }
.slider { position: relative; height: 30px; margin: 7px 18px 0; width: 486px; background: linear-gradient(#757575, #757575) 0 6px / 100% 6px no-repeat; }
.s8 { margin-top: 8px; }
.slider svg { position: absolute; top: 3px; width: 24px; height: 25px; margin-left: -12px; }
.controls hr { border: 0; height: 2px; margin: 4px -8px 0; background: #424242; }
.texture { display: flex; align-items: center; margin-top: 10px; }
.texture span { width: 77px; }
.texture .select { flex: 1; padding-left: 13px; }
.off { color: #7e7e7e; }
.off .val { background: transparent; border-color: #616161; }

.lights-panel { margin-top: 4px; border-top: 2px solid #383838; flex: 1; display: flex; flex-direction: column; background: #535353; min-height: 0; }
.lights-panel .ptabs { height: 55px; }
.lights-panel .ptabs b { line-height: 51px; }
.lights-panel .ptabs div { padding-bottom: 3px; }
.blank { height: 68px; flex: none; }
.list { flex: 1; display: flex; background: #4c4c4c; min-height: 0; border-top: 1px solid #4a4a4a; }
.item { flex: 1; height: 39px; display: flex; background: #535353; align-items: center; border-bottom: 1px solid #474747; }
.eye { width: 43px; height: 38px; border-right: 2px solid #404040; display: flex; align-items: center; padding-left: 10px; }
.eye svg { width: 25px; height: 15px; }
.ispot { width: 65px; padding-left: 37px; }
.ispot svg { width: 26px; height: 23px; }
.name { flex: 1; height: 34px; line-height: 34px; padding-left: 12px; background: #6b6b6b; color: #f0f0f0; letter-spacing: .3px; }
.pfoot { height: 54px; flex: none; border-top: 2px solid #404040; display: flex; justify-content: flex-end; align-items: center; padding-right: 50px; }
.pfoot svg { width: 22px; height: 24px; }

/* desktop and dock */
.desktop { flex: 1; padding: 6px 116px 10px; background: linear-gradient(90deg, #35108c 0, #1c0a66 500px, #210a75 1400px, #34079a 2100px, #5a00b4 2700px, #6400b8 3300px, #4a00b0 3700px, #5a02e0 4096px); }
.dock { display: flex; height: 156px; padding: 8px 0 0 4px; border: 2px solid #ffffff38; border-radius: 46px; background: linear-gradient(90deg, #8560da 0, #7c61da 900px, #8a5cf0 1500px, #9858fa 2000px, #b655f8 2450px, #c252fa 3100px, #b058fc 3400px, #a25aff 3864px); }
.app { position: relative; flex: 0 0 133.330px; display: flex; flex-direction: column; align-items: center; }
.app svg { width: 126px; height: 126px; margin-left: -1px; filter: drop-shadow(0 1px 1px #0004); }
.run::after { content: ""; width: 8px; height: 8px; margin: 8px 0 0 -1px; border-radius: 50%; background: #1c0070; }
.badge { position: absolute; left: 84px; top: -1px; width: 48px; height: 48px; border-radius: 50%; background: #fb3b3b; color: #fff; font-size: 26px; font-weight: 400; line-height: 48px; text-align: center; }
.divider { flex: 0 0 61px; height: 116px; margin-top: 10px; background: linear-gradient(#7a14c8, #7a14c8) 50% 0 / 2px 100% no-repeat; }
.adobe { font: 700 60px "Open Sans", sans-serif; text-anchor: middle; letter-spacing: -1px; }
.ccbg { width: 104px; height: 102px; border-radius: 23px; background: radial-gradient(circle at 50% 0, #f00 0, transparent 50%), radial-gradient(circle at 0 100%, #3a8cf8 10%, transparent 55%), radial-gradient(circle at 90% 100%, #5ce03c 5%, transparent 45%), radial-gradient(circle at 0 10%, #fb1cb0 0, transparent 50%), linear-gradient(90deg, #e86cc0, #ff8a10 60%, #ffa000); }
```
